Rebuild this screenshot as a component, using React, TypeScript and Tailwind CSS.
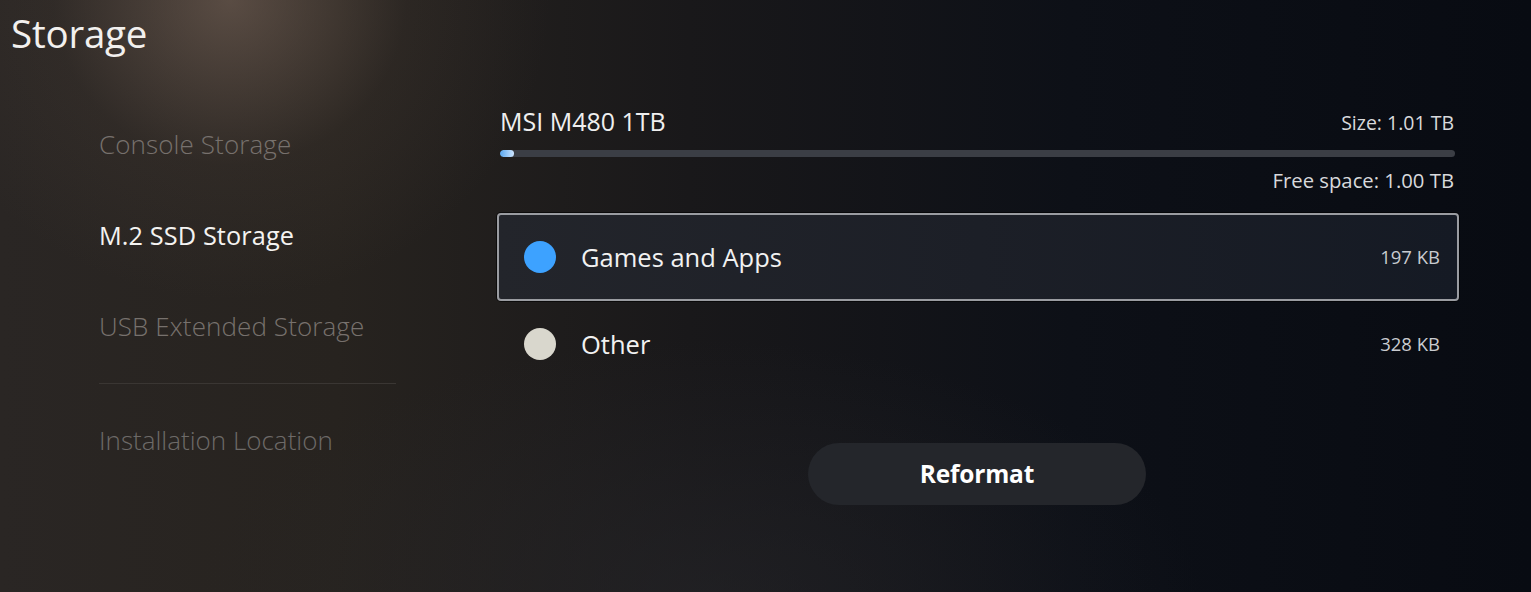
import React from 'react';

const menu = [
  { label: 'Console Storage', active: false },
  { label: 'M.2 SSD Storage', active: true },
  { label: 'USB Extended Storage', active: false },
];

const rows = [
  { label: 'Games and Apps', size: '197 KB', color: 'bg-[#3da2ff]', selected: true },
  { label: 'Other', size: '328 KB', color: 'bg-[#d9d7cd]', selected: false },
];

const App: React.FC = () => {
  return (
    <div className="relative w-[1531px] h-[592px] overflow-hidden font-['Open_Sans','Noto_Sans',sans-serif] bg-[linear-gradient(90deg,#2a2624_0%,#27231f_22%,#19181a_45%,#0d1017_70%,#080b12_100%)]">
      {/* spotlight glow */}
      <div className="pointer-events-none absolute inset-0 bg-[radial-gradient(ellipse_320px_300px_at_230px_0px,rgba(150,125,110,0.45),rgba(90,75,65,0.15)_55%,transparent_100%)]" />
      <div className="pointer-events-none absolute inset-0 bg-[radial-gradient(ellipse_500px_260px_at_700px_600px,rgba(40,40,44,0.5),transparent_100%)]" />

      <div className="relative">
        <h1 className="pl-[11px] pt-[9px] text-[38.5px] leading-[48px] text-[#f2f0ee] tracking-[-0.2px]">Storage</h1>

        <div className="flex mt-[69px]">
          {/* left menu */}
          <nav className="w-[297px] ml-[99px] flex flex-col">
            {menu.map((m) => (
              <div
                key={m.label}
                className={`h-[91px] flex items-start leading-[36px] tracking-[0.1px] ${
                  m.active ? 'text-[25.3px] text-[#f4f3f1]' : 'text-[26px] text-[#77716d] font-light'
                }`}
              >
                {m.label}
              </div>
            ))}
            <div className="-mt-[16px] h-px bg-[#3a3633]" />
            <div className="mt-[38px] text-[26px] leading-[36px] font-light text-[#6d6a68]">Installation Location</div>
          </nav>

          {/* right panel */}
          <section className="ml-[104px] w-[958px] -mt-[22px]">
            <div className="flex items-end justify-between pr-[4px]">
              <span className="text-[25px] leading-[34px] text-[#efefef]">MSI M480 1TB</span>
              <span className="text-[19.5px] leading-[30px] text-[#d8d9dc]">Size: 1.01 TB</span>
            </div>
            <div className="mt-[12px] mr-[3px] h-[7px] rounded-full bg-[#3b3e45] overflow-hidden">
              <div className="h-full w-[14px] rounded-full bg-[linear-gradient(90deg,#5aa8f0,#cfe6ff)]" />
            </div>
            <div className="mt-[8px] pr-[4px] text-right text-[20.3px] leading-[30px] text-[#d8d9dc]">Free space: 1.00 TB</div>

            <div className="mt-[18px] -ml-[3px] w-[962px] flex flex-col">
              {rows.map((r) => (
                <div
                  key={r.label}
                  className={`flex items-center pl-[25px] pr-[17px] rounded-[4px] ${
                    r.selected
                      ? 'h-[88px] border-2 border-[#9a9ca1] bg-[linear-gradient(90deg,#23252b,#1c1f27_50%,#151a24)] shadow-[0_0_0_1px_rgba(0,0,0,0.6)]'
                      : 'h-[86px] border-2 border-transparent'
                  }`}
                >
                  <span className={`w-[32px] h-[32px] rounded-full ${r.color}`} />
                  <span className="ml-[25px] text-[25.5px] leading-[34px] text-[#f1f1f1]">{r.label}</span>
                  <span className="ml-auto text-[18.5px] leading-[28px] text-[#c9cbd0]">{r.size}</span>
                </div>
              ))}
            </div>

            <div className="mt-[56px] flex justify-center pr-[4px]">
              <button className="w-[338px] h-[62px] rounded-full bg-[#24262b] text-[24.5px] font-bold text-white tracking-[-0.2px]">
                Reformat
              </button>
            </div>
          </section>
        </div>
      </div>
    </div>
  );
};

export default App;
